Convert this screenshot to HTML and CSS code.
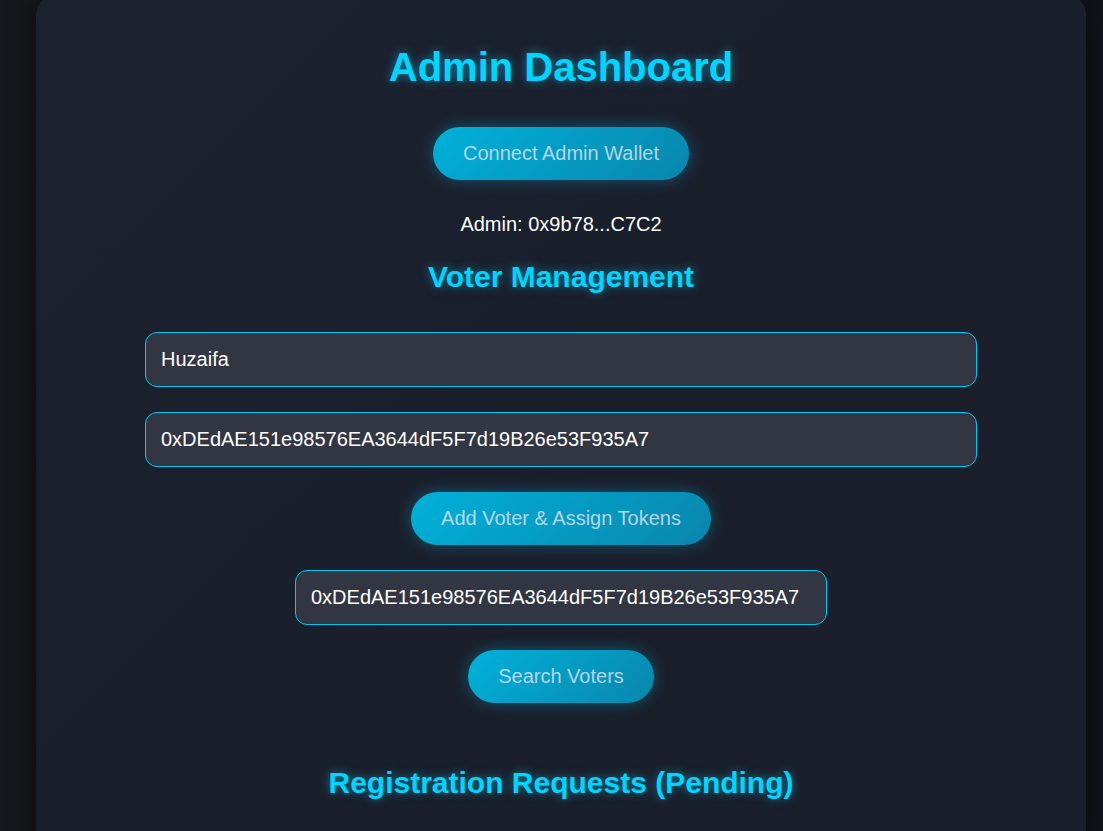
FILE: index.html
```html
<!DOCTYPE html>
<html lang="en">
<head>
<meta charset="utf-8">
<title>Admin Dashboard</title>
<link rel="stylesheet" href="styles.css">
</head>
<body>
  <main class="card">
    <h1 class="title">Admin Dashboard</h1>
    <button class="btn btn-connect">Connect Admin Wallet</button>
    <p class="admin-address">Admin: 0x9b78...C7C2</p>

    <section class="section voter">
      <h2 class="section-title">Voter Management</h2>
      <div class="form">
        <input class="field field-wide" type="text" value="Huzaifa">
        <input class="field field-wide" type="text" value="0xDEdAE151e98576EA3644dF5F7d19B26e53F935A7">
        <button class="btn">Add Voter &amp; Assign Tokens</button>
        <input class="field field-search" type="text" value="0xDEdAE151e98576EA3644dF5F7d19B26e53F935A7">
        <button class="btn">Search Voters</button>
      </div>
    </section>

    <section class="section requests">
      <h2 class="section-title">Registration Requests (Pending)</h2>
    </section>
  </main>
</body>
</html>
```

FILE: styles.css
```css
* {
  box-sizing: border-box;
}

html, body {
  margin: 0;
  padding: 0;
  overflow: hidden;
}

body {
  background: linear-gradient(90deg, #15181c 0%, #111419 100%);
  font-family: "Liberation Sans", Arial, sans-serif;
  color: #ffffff;
  height: 831px;
}

.card {
  width: 1050px;
  margin: -5px 0 0 36px;
  padding: 49px 0 60px;
  border-radius: 20px;
  background: linear-gradient(135deg, #1c2130 0%, #1a1f2b 60%, #1b1f2b 100%);
  box-shadow: 0 0 28px rgba(0, 0, 0, 0.55);
  display: flex;
  flex-direction: column;
  align-items: center;
  text-align: center;
}

.title {
  margin: 0;
  font-size: 40px;
  font-weight: bold;
  line-height: 46px;
  color: #00d4ff;
  text-shadow: 0 0 10px rgba(0, 212, 255, 0.55);
}

.btn {
  font-family: "Liberation Sans", Arial, sans-serif;
  font-size: 20px;
  line-height: 23px;
  padding: 15px 30px;
  border: none;
  border-radius: 30px;
  color: rgba(220, 228, 235, 0.82);
  background: linear-gradient(135deg, #00b1d9 0%, #0a86ad 100%);
  box-shadow: 0 0 16px rgba(0, 190, 240, 0.35);
  cursor: pointer;
}

.btn-connect {
  margin-top: 37px;
}

.admin-address {
  margin: 33px 0 0;
  font-size: 20px;
  line-height: 23px;
  color: #ffffff;
}

.section {
  display: flex;
  flex-direction: column;
  align-items: center;
  width: 100%;
}

.section-title {
  margin: 0;
  font-size: 30px;
  font-weight: bold;
  line-height: 34px;
  color: #00d4ff;
  text-shadow: 0 0 10px rgba(0, 212, 255, 0.55);
}

.voter {
  margin-top: 24px;
}

.form {
  margin-top: 38px;
  display: flex;
  flex-direction: column;
  align-items: center;
  gap: 25px;
}

.field {
  font-family: "Liberation Sans", Arial, sans-serif;
  font-size: 20px;
  line-height: 23px;
  padding: 15px 15px;
  height: 55px;
  color: #ffffff;
  background: #323643;
  border: 1px solid #00c8f5;
  border-radius: 12px;
  outline: none;
}

.field-wide {
  width: 832px;
}

.field-search {
  width: 532px;
}

.requests {
  margin-top: 63px;
}
```
